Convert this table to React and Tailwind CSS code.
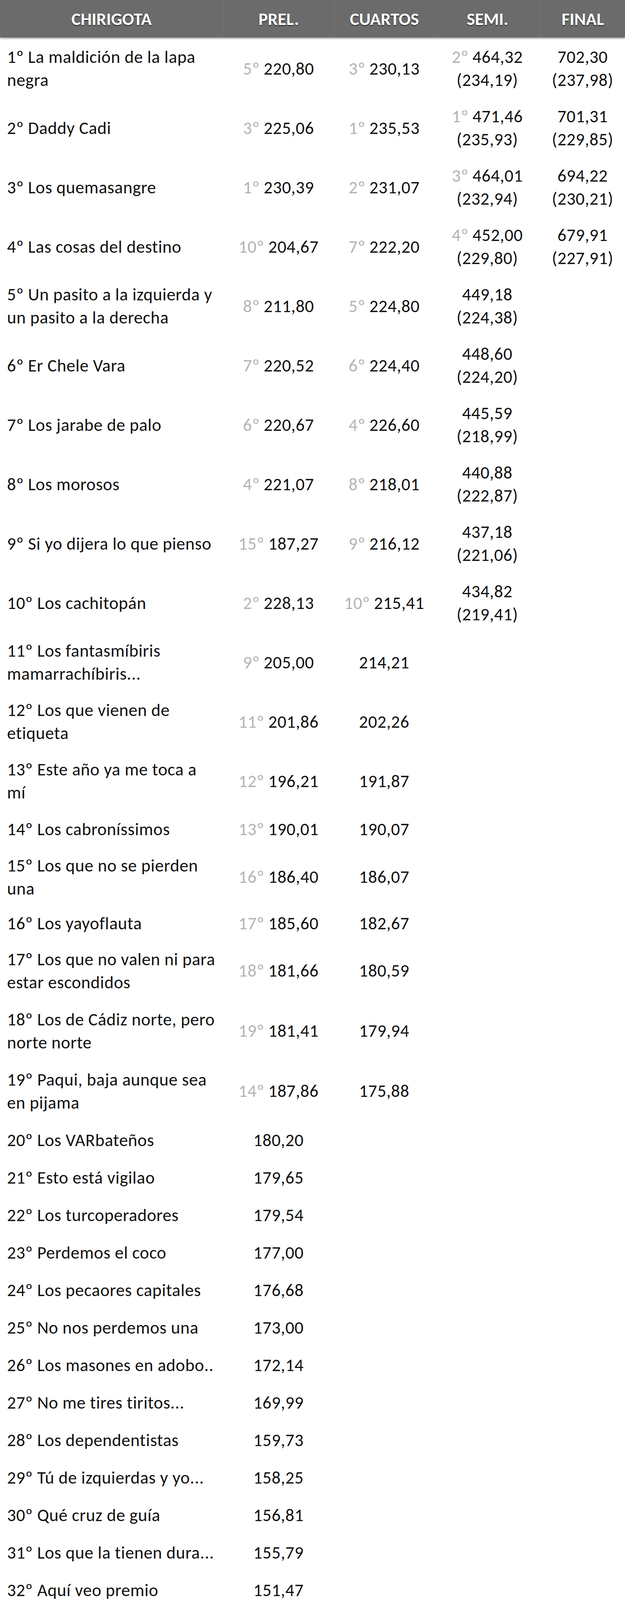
import React from 'react'

const font = { fontFamily: 'Carlito, Calibri, Lato, sans-serif' }

// name lines, prel [rank, value], cuartos [rank, value], semi [rank, value, sub], final [value, sub], row height class
const rows = [
    { n: ['1º La maldición de la lapa', 'negra'], p: ['5º', '220,80'], c: ['3º', '230,13'], s: ['2º', '464,32', '(234,19)'], f: ['702,30', '(237,98)'], h: 'h-[152px]' },
    { n: ['2º Daddy Cadi'], p: ['3º', '225,06'], c: ['1º', '235,53'], s: ['1º', '471,46', '(235,93)'], f: ['701,31', '(229,85)'], h: 'h-[152px]' },
    { n: ['3º Los quemasangre'], p: ['1º', '230,39'], c: ['2º', '231,07'], s: ['3º', '464,01', '(232,94)'], f: ['694,22', '(230,21)'], h: 'h-[152px]' },
    { n: ['4º Las cosas del destino'], p: ['10º', '204,67'], c: ['7º', '222,20'], s: ['4º', '452,00', '(229,80)'], f: ['679,91', '(227,91)'], h: 'h-[152px]' },
    { n: ['5º Un pasito a la izquierda y', 'un pasito a la derecha'], p: ['8º', '211,80'], c: ['5º', '224,80'], s: [null, '449,18', '(224,38)'], h: 'h-[152px]' },
    { n: ['6º Er Chele Vara'], p: ['7º', '220,52'], c: ['6º', '224,40'], s: [null, '448,60', '(224,20)'], h: 'h-[152px]' },
    { n: ['7º Los jarabe de palo'], p: ['6º', '220,67'], c: ['4º', '226,60'], s: [null, '445,59', '(218,99)'], h: 'h-[152px]' },
    { n: ['8º Los morosos'], p: ['4º', '221,07'], c: ['8º', '218,01'], s: [null, '440,88', '(222,87)'], h: 'h-[152px]' },
    { n: ['9º Si yo dijera lo que pienso'], p: ['15º', '187,27'], c: ['9º', '216,12'], s: [null, '437,18', '(221,06)'], h: 'h-[152px]' },
    { n: ['10º Los cachitopán'], p: ['2º', '228,13'], c: ['10º', '215,41'], s: [null, '434,82', '(219,41)'], h: 'h-[152px]' },
    { n: ['11º Los fantasmíbiris', 'mamarrachíbiris...'], p: ['9º', '205,00'], c: [null, '214,21'], h: 'h-[152px]' },
    { n: ['12º Los que vienen de', 'etiqueta'], p: ['11º', '201,86'], c: [null, '202,26'], h: 'h-[152px]' },
    { n: ['13º Este año ya me toca a', 'mí'], p: ['12º', '196,21'], c: [null, '191,87'], h: 'h-[152px]' },
    { n: ['14º Los cabroníssimos'], p: ['13º', '190,01'], c: [null, '190,07'], h: 'h-[95px]' },
    { n: ['15º Los que no se pierden', 'una'], p: ['16º', '186,40'], c: [null, '186,07'], h: 'h-[149px]' },
    { n: ['16º Los yayoflauta'], p: ['17º', '185,60'], c: [null, '182,67'], h: 'h-[88px]' },
    { n: ['17º Los que no valen ni para', 'estar escondidos'], p: ['18º', '181,66'], c: [null, '180,59'], h: 'h-[155px]' },
    { n: ['18º Los de Cádiz norte, pero', 'norte norte'], p: ['19º', '181,41'], c: [null, '179,94'], h: 'h-[153px]' },
    { n: ['19º Paqui, baja aunque sea', 'en pijama'], p: ['14º', '187,86'], c: [null, '175,88'], h: 'h-[155px]' },
]

const tail = [
    'Los VARbateños|180,20', 'Esto está vigilao|179,65', 'Los turcoperadores|179,54', 'Perdemos el coco|177,00',
    'Los pecaores capitales|176,68', 'No nos perdemos una|173,00', 'Los masones en adobo..|172,14',
    'No me tires tiritos...|169,99', 'Los dependentistas|159,73', 'Tú de izquierdas y yo...|158,25',
    'Qué cruz de guía|156,81', 'Los que la tienen dura...|155,79', 'Aquí veo premio|151,47',
    'El chaval de la beca|150,93', 'Mateo que te veo|149,87', 'El sábado me lo trago...|149,60',
    'Los viejos vengadores|148,32', 'El nombre me lo estoy...|147,68', 'La última y nos vamos|146,93',
    'Los despegaos|145,00', 'La ciudad no es para mí|141,07', 'El tiempo entre costuras|140,60',
    'Hospital General San...|140,33', 'Tin-ta, tin-ta|138,07', 'Este año somos...|136,54',
    'Una chirigota sin clase|127,54', 'Estamos en venta|119,27', 'Las niñas de Mª Carmen|108,34',
    'El veleta|105,80', 'Los buscapagas|105,27', 'Los que tienen mucho...|102,54', 'Las mafiosas|102,12',
    'Las momias de güete...|101,39', 'Esta chirigota huele...|100,93', 'Pasando olímpicamente|99,47',
    '¿Salimos o no salimos?|99,00',
]

tail.forEach((t, i) => {
    const [name, val] = t.split('|')
    const pos = i + 20
    rows.push({ n: [pos + 'º ' + name], p: [null, val], h: pos === 39 ? 'h-[73px]' : 'h-[96px]' })
})

const Rank = ({ r }) => r ? <span className='text-[#b4b4b4] mr-[10px]'>{r}</span> : null

const Cell = ({ rank, value, sub }) => (
    <div className='flex flex-col items-center justify-center'>
        {value && <div className='whitespace-nowrap'><Rank r={rank} />{value}</div>}
        {sub && <div className='whitespace-nowrap'>{sub}</div>}
    </div>
)

const heads = ['CHIRIGOTA', 'PREL.', 'CUARTOS', 'SEMI.', 'FINAL']

export default function App() {
    return (
        <div className='w-[1600px] h-[6303px] overflow-hidden bg-white text-[#111] text-[45px] leading-[59px] tracking-[0.6px]' style={font}>
            {/* header */}
            <div className='h-[99px]'>
                <div className='grid grid-cols-[571px_284px_257px_271px_217px] h-[96px] bg-[#6b6b6b] shadow-[0_3px_4px_rgba(0,0,0,0.35)]'>
                    {heads.map((h, i) => (
                        <div key={h} className={'flex items-center justify-center font-bold text-white text-[45px] tracking-normal [text-shadow:0_2px_2px_#222] ' + (i ? 'border-l border-[#777]' : '')}>
                            {h}
                        </div>
                    ))}
                </div>
            </div>

            {rows.map((r, i) => (
                <div key={i} className={'grid grid-cols-[571px_284px_257px_271px_217px] ' + r.h}>
                    <div className='flex flex-col justify-center pl-[18px]'>
                        {r.n.map((l, j) => <div key={j} className='whitespace-nowrap'>{l}</div>)}
                    </div>
                    <Cell rank={r.p[0]} value={r.p[1]} />
                    {r.c ? <Cell rank={r.c[0]} value={r.c[1]} /> : <div />}
                    {r.s ? <Cell rank={r.s[0]} value={r.s[1]} sub={r.s[2]} /> : <div />}
                    {r.f ? <Cell value={r.f[0]} sub={r.f[1]} /> : <div />}
                </div>
            ))}
        </div>
    )
}
